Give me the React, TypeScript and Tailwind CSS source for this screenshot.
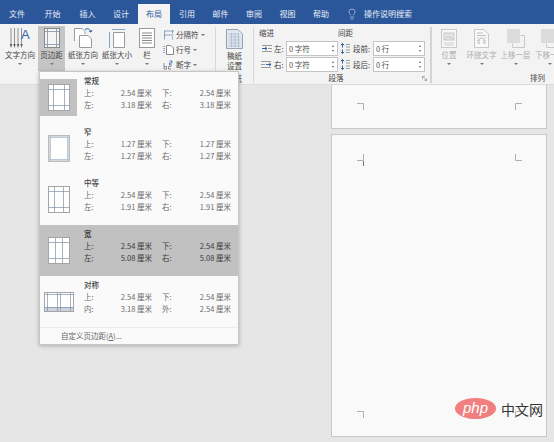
import { Lightbulb } from 'lucide-react'
import type { ReactNode } from 'react'

const font = { fontFamily: '"Noto Sans CJK SC", "Liberation Sans", sans-serif' }

const tabs = [
  { label: '文件', w: 'w-[34px]' },
  { label: '开始', w: 'w-[37px]' },
  { label: '插入', w: 'w-[33px]' },
  { label: '设计', w: 'w-[34px]' },
  { label: '布局', w: 'w-[32px]', active: true },
  { label: '引用', w: 'w-[34px]' },
  { label: '邮件', w: 'w-[33px]' },
  { label: '审阅', w: 'w-[34px]' },
  { label: '视图', w: 'w-[33px]' },
  { label: '帮助', w: 'w-[34px]' },
]

const margins = [
  { name: '常规', v: ['2.54', '2.54', '3.18', '3.18'], l: ['上:', '下:', '左:', '右:'], kind: 'normal', bg: '' },
  { name: '窄', v: ['1.27', '1.27', '1.27', '1.27'], l: ['上:', '下:', '左:', '右:'], kind: 'narrow', bg: '' },
  { name: '中等', v: ['2.54', '2.54', '1.91', '1.91'], l: ['上:', '下:', '左:', '右:'], kind: 'mid', bg: '' },
  { name: '宽', v: ['2.54', '2.54', '5.08', '5.08'], l: ['上:', '下:', '左:', '右:'], kind: 'wide', bg: 'bg-[#c1c1c1]' },
  { name: '对称', v: ['2.54', '2.54', '3.18', '2.54'], l: ['上:', '下:', '内:', '外:'], kind: 'mirror', bg: '' },
]

function Caret() {
  return <div className="w-0 h-0 border-x-[2px] border-x-transparent border-t-[2px] border-t-[#777]" />
}

function PageIcon({ kind }: { kind: string }) {
  if (kind === 'mirror') {
    return (
      <svg width="30" height="20" viewBox="0 0 30 20">
        <rect x="0.5" y="0.5" width="29" height="19" fill="#fff" stroke="#a5a5a5" />
        <rect x="1" y="15" width="28" height="4" fill="#cdd4dd" />
        <path d="M1 2.500H29M1 15.500H29M3.500 1V19M13.500 1V19M16.500 1V19M26.500 1V19" stroke="#7d90a8" strokeWidth="0.7" />
      </svg>
    )
  }
  const x = { normal: [5, 16], narrow: [2, 19], mid: [6, 15], wide: [7, 14] }[kind] ?? [5, 16]
  const y = kind === 'narrow' ? [2, 24] : [5, 21]
  return (
    <svg width="22" height="27" viewBox="0 0 22 27">
      <rect x="0.5" y="0.5" width="21" height="26" fill="#fff" stroke={kind === 'narrow' ? '#bcbcbc' : '#a5a5a5'} />
      {kind === 'narrow' && <path d="M1 1H21V26H1ZM3 3V24H19V3Z" fill="#d5dae1" fillRule="evenodd" />}
      <path
        d={`M1 ${y[0] + 0.5}H21M1 ${y[1] + 0.5}H21M${x[0] + 0.5} 1V26M${x[1] + 0.5} 1V26`}
        stroke={kind === 'narrow' ? '#b5c2d1' : '#7d90a8'}
        strokeWidth="0.7"
      />
    </svg>
  )
}

function MarginRow({ item, selected }: { item: (typeof margins)[number]; selected: boolean }) {
  return (
    <div className={`flex h-[51px] ${item.bg}`}>
      <div className="w-[37px] mr-[7px] flex items-center justify-center shrink-0">
        {selected ? (
          <div className="w-[37px] h-[37px] bg-[#c1c1c1] flex items-center justify-center">
            <PageIcon kind={item.kind} />
          </div>
        ) : (
          <PageIcon kind={item.kind} />
        )}
      </div>
      <div className={`flex-1 pt-[3px] text-[7.5px] leading-[12px] ${item.bg ? 'text-[#3a3a3a]' : 'text-[#6a6a6a]'}`}>
        <div className={`font-medium ${item.bg ? 'text-[#222]' : 'text-[#444]'}`}>{item.name}</div>
        {[0, 2].map((i) => (
          <div key={i} className="flex">
            <span className="w-[30px]">{item.l[i]}</span>
            <span className="w-[38px] text-right whitespace-nowrap">{item.v[i]} 厘米</span>
            <span className="w-[10px]" />
            <span className="w-[30px]">{item.l[i + 1]}</span>
            <span className="w-[39px] text-right whitespace-nowrap">{item.v[i + 1]} 厘米</span>
          </div>
        ))}
      </div>
    </div>
  )
}

function Spin({ text }: { text: string }) {
  return (
    <div className="w-[52px] h-[15px] border border-[#c4c4c4] bg-white flex items-center justify-between pl-[2px] pr-[3px] text-[7.5px] text-[#555]">
      <span>{text}</span>
      <div className="flex flex-col gap-[3px]">
        <div className="w-0 h-0 border-x-[1.5px] border-x-transparent border-b-[2px] border-b-[#666]" />
        <div className="w-0 h-0 border-x-[1.5px] border-x-transparent border-t-[2px] border-t-[#666]" />
      </div>
    </div>
  )
}

function BigBtn({ label, children, w, active }: { label: string; children: ReactNode; w: string; active?: boolean }) {
  return (
    <div className={`${w} h-[45px] shrink-0 flex flex-col items-center ${active ? 'bg-[#c5c5c5]' : ''}`}>
      <div className="h-[24px] flex items-center justify-center">{children}</div>
      <div className="text-[7.5px] leading-[10px] whitespace-nowrap text-[#444]">{label}</div>
      <div className="mt-[3px]"><Caret /></div>
    </div>
  )
}

function GreyBtn({ label, children, w }: { label: string; children: ReactNode; w: string }) {
  return (
    <div className={`${w} shrink-0 flex flex-col items-center`}>
      <div className="h-[19px] flex items-center justify-center">{children}</div>
      <div className="mt-[2px] text-[7.5px] leading-[10px] whitespace-nowrap text-[#adadad]">{label}</div>
      <div className="mt-[3px]"><Caret /></div>
    </div>
  )
}

function Corner({ d }: { d: string }) {
  return (
    <svg width="7" height="7" viewBox="0 0 7 7">
      <path d={d} fill="none" stroke="#b0b0b0" />
    </svg>
  )
}

function IndentIcon({ flip }: { flip?: boolean }) {
  return (
    <svg width="11" height="9" viewBox="0 0 11 9">
      <path d={flip ? 'M0 1.500H10M0 4.500H4M0 7.500H10' : 'M1 1.500H11M7 4.500H11M1 7.500H11'} stroke="#9a9a9a" />
      <path d={flip ? 'M5 4.500H10M8 2.800L10 4.500L8 6.200' : 'M1 4.500H6M4 2.800L6 4.500L4 6.200'} stroke="#2b65ac" fill="none" />
    </svg>
  )
}

function SpacingIcon() {
  return (
    <svg width="10" height="11" viewBox="0 0 10 11">
      <path d="M2.500 0.500V4.500M0.800 2.200L2.500 0.500L4.200 2.200M2.500 6.500V10.500M0.800 8.800L2.500 10.500L4.200 8.800" stroke="#2b65ac" fill="none" />
      <path d="M6 1.500H10M6 4H10M6 7H10M6 9.500H10" stroke="#9a9a9a" />
    </svg>
  )
}

export default function App() {
  return (
    <div style={font} className="relative w-[554px] h-[442px] overflow-hidden bg-[#e6e6e6]">
      {/* Title tabs */}
      <div className="h-[24px] bg-[#2b579a] flex items-end text-[8px] text-[#e8eef7]">
        {tabs.map((t) => (
          <div
            key={t.label}
            className={`${t.w} h-[20px] flex items-center justify-center ${t.active ? 'bg-[#f3f3f3] text-[#2b579a]' : ''}`}
          >
            {t.label}
          </div>
        ))}
        <div className="ml-[8px] h-[20px] flex items-center gap-[6px]">
          <Lightbulb size={12} strokeWidth={1.1} />
          <span>操作说明搜索</span>
        </div>
      </div>

      {/* Ribbon */}
      <div className="h-[61px] bg-[#f3f3f3] border-b border-[#dcdcdc] flex text-[#444]">
        <div className="w-[215px] shrink-0 pl-[3px] pt-[2px] flex">
          <BigBtn label="文字方向" w="w-[34px] mr-[1px]">
            <svg width="22" height="23" viewBox="0 0 22 23">
              <path d="M2 1V19M5.500 1V19M9 1V19M12.500 1V19" stroke="#777" strokeWidth="0.8" />
              <path d="M0.700 17L2 21L3.300 17ZM4.200 17L5.500 21L6.800 17ZM7.700 17L9 21L10.300 17ZM11.200 17L12.500 21L13.800 17Z" fill="#666" />
              <text x="12" y="12" fontSize="13" fontFamily="Liberation Sans" fill="#2b65ac">A</text>
            </svg>
          </BigBtn>
          <BigBtn label="页边距" w="w-[27px]" active>
            <svg width="16" height="20" viewBox="0 0 16 20">
              <rect x="0.5" y="0.5" width="15" height="19" fill="#f5f5f5" stroke="#888" />
              <path d="M1 3.500H15M1 16.500H15M3.500 1V19M12.500 1V19" stroke="#7d90a8" strokeWidth="0.8" />
            </svg>
          </BigBtn>
          <BigBtn label="纸张方向" w="w-[36px]">
            <svg width="24" height="22" viewBox="0 0 24 22">
              <path d="M3.500 14V1.500H11L14 4.500V7" fill="#fff" stroke="#9a9a9a" />
              <path d="M8.500 20.500V8.500H17L20.500 12V20.500Z" fill="#fff" stroke="#9a9a9a" />
              <path d="M14 2.500C17 1 19 2 20 5M20 5L18 4M20 5L21 3" fill="none" stroke="#2b65ac" />
            </svg>
          </BigBtn>
          <BigBtn label="纸张大小" w="w-[32px]">
            <svg width="20" height="22" viewBox="0 0 20 22">
              <path d="M6.500 5.500H17.500V20.500H6.500Z" fill="#fff" stroke="#9a9a9a" />
              <path d="M5 2.500H18M2.500 5V21" stroke="#6d8fb8" strokeWidth="0.8" />
            </svg>
          </BigBtn>
          <BigBtn label="栏" w="w-[28px]">
            <svg width="16" height="20" viewBox="0 0 16 20">
              <rect x="0.500" y="0.500" width="15" height="19" fill="#fff" stroke="#9a9a9a" />
              <path d="M3 5H13M3 7.500H13M3 10H13M3 12.500H13M3 15H13" stroke="#8a8a8a" />
            </svg>
          </BigBtn>
          <div className="pl-[2px] pt-[1px] text-[7.5px] leading-[15px] whitespace-nowrap">
            <div className="flex items-center gap-[2px]">
              <svg width="11" height="10" viewBox="0 0 11 10">
                <path d="M1.500 0.500V9.500M9.500 0.500V3.500M9.500 6.500V9.500M1.500 5H10.500M1.500 1H11" stroke="#6d8fb8" fill="none" strokeWidth="0.8" />
              </svg>
              <span>分隔符</span>
              <Caret />
            </div>
            <div className="flex items-center gap-[2px]">
              <svg width="11" height="10" viewBox="0 0 11 10">
                <path d="M1 1V9" stroke="#2b65ac" strokeDasharray="1 1" />
                <path d="M3.500 0.500H8L10.500 3V9.500H3.500Z" fill="#fff" stroke="#8a8a8a" />
              </svg>
              <span>行号</span>
              <Caret />
            </div>
            <div className="flex items-center gap-[2px]">
              <svg width="11" height="10" viewBox="0 0 11 10">
                <path d="M1 3V9H3.500V6.500H1M5.500 6.500H8M5.500 6.500V9H8" stroke="#777" fill="none" strokeWidth="0.8" />
                <path d="M6.500 1H9V3H6.500V5H9" stroke="#2b65ac" fill="none" strokeWidth="0.8" />
              </svg>
              <span>断字</span>
              <Caret />
            </div>
          </div>
        </div>
        <div className="w-px h-[56px] mt-[3px] bg-[#d8d8d8] shrink-0" />
        <div className="w-[37px] shrink-0 pt-[5px] text-[7.5px] leading-[10px] text-center">
          <svg width="17" height="20" viewBox="0 0 17 20" className="mx-auto">
            <path d="M0.500 0.500H12L16.500 5V19.500H0.500Z" fill="#dfe6f0" stroke="#97a3b3" />
            <path d="M3 5H13M3 8H14M3 11H14M3 14H14M3 17H14M5.500 4V18M9 4V18M12.500 4V18" stroke="#aab5c4" strokeWidth="0.7" />
          </svg>
          <div className="mt-[2px]">稿纸</div>
          <div>设置</div>
          <div className="mt-[3px]">稿纸</div>
        </div>
        <div className="w-px h-[56px] mt-[3px] bg-[#d8d8d8] shrink-0" />
        <div className="w-[176px] shrink-0 relative pl-[5px] pt-[4px] text-[7.5px]">
          <div className="flex">
            <div className="w-[79px]">
              <div className="leading-[10px] mb-[3px]">缩进</div>
              <div className="flex flex-col gap-[1px]">
                {['左:', '右:'].map((t, i) => (
                  <div key={t} className="flex items-center pl-[2px]">
                    <IndentIcon flip={i === 1} />
                    <span className="w-[11px] ml-[2px] mr-[1px] whitespace-nowrap">{t}</span>
                    <Spin text="0 字符" />
                  </div>
                ))}
              </div>
            </div>
            <div>
              <div className="leading-[10px] mb-[3px]">间距</div>
              <div className="flex flex-col gap-[1px]">
                {['段前:', '段后:'].map((t) => (
                  <div key={t} className="flex items-center pl-[2px]">
                    <SpacingIcon />
                    <span className="w-[20px] ml-[3px] whitespace-nowrap">{t}</span>
                    <Spin text="0 行" />
                  </div>
                ))}
              </div>
            </div>
          </div>
          <div className="text-center leading-[10px] mt-[1px] pr-[17px]">段落</div>
          <svg width="5" height="5" viewBox="0 0 5 5" className="absolute left-[168px] top-[52px]">
            <path d="M0.500 3V0.500H3M1.500 1.500L4.500 4.500M4.500 2.500V4.500H2.500" stroke="#888" fill="none" strokeWidth="0.7" />
          </svg>
        </div>
        <div className="w-[2px] h-[56px] mt-[3px] bg-[#d4d4d4] shrink-0" />
        <div className="w-[122px] shrink-0 pt-[5px] text-[7.5px]">
          <div className="flex">
            <GreyBtn label="位置" w="w-[34px]">
              <svg width="16" height="19" viewBox="0 0 16 19">
                <rect x="0.500" y="0.500" width="15" height="18" fill="#f8f8f8" stroke="#c8c8c8" />
                <rect x="3" y="4" width="10" height="7" fill="#e4e4e4" stroke="#c8c8c8" />
                <path d="M4 10L7 7L9 9L10 8L12 10M3 14H13M3 16H13" stroke="#bdbdbd" fill="none" strokeWidth="0.7" />
              </svg>
            </GreyBtn>
            <GreyBtn label="环绕文字" w="w-[31px]">
              <svg width="15" height="19" viewBox="0 0 15 19">
                <path d="M0.500 0.500H10L14.500 5V18.500H0.500Z" fill="#f8f8f8" stroke="#c8c8c8" />
                <path d="M3 4H9M3 6.500H12M3 9H4.500M10.500 9H12M3 11.500H4M11 11.500H12M3 14H4M11 14H12" stroke="#c0c0c0" />
                <path d="M5 15V11C5 8.500 10 8.500 10 11V15" stroke="#b0b0b0" fill="none" />
              </svg>
            </GreyBtn>
            <GreyBtn label="上移一层" w="w-[37px]">
              <svg width="18" height="19" viewBox="0 0 18 19">
                <rect x="0" y="0" width="13" height="14" fill="#dcdcdc" />
                <path d="M13.500 6.500H17.500V18.500H5.500V14.500" fill="none" stroke="#c8c8c8" />
              </svg>
            </GreyBtn>
            <GreyBtn label="下移一层" w="w-[32px]">
              <svg width="18" height="19" viewBox="0 0 18 19">
                <rect x="0" y="0" width="13" height="14" fill="#dcdcdc" />
                <path d="M13.500 6.500H17.500V18.500H5.500V14.500" fill="none" stroke="#c8c8c8" />
              </svg>
            </GreyBtn>
          </div>
          <div className="leading-[10px] mt-[8px] pl-[98px] whitespace-nowrap">排列</div>
        </div>
      </div>

      {/* Document pages */}
      <div className="flex justify-end pr-[7px]">
        <div className="w-[216px]">
          <div className="h-[44px] border border-t-0 border-[#c9c9c9] bg-[#f9f9f9] flex justify-between pl-[25px] pr-[24px] pt-[18px]">
            <Corner d="M0 0.500H6.500V7" />
            <Corner d="M7 0.500H0.500V7" />
          </div>
          <div className="relative mt-[5px] h-[303px] border border-[#c9c9c9] bg-[#f9f9f9] pl-[25px] pr-[24px] pt-[19px] pb-[18px] flex flex-col justify-between">
            <div className="flex justify-between">
              <Corner d="M0 6.500H6.500V0" />
              <Corner d="M0.500 0V6.500H7" />
            </div>
            <div className="absolute left-[31px] top-[26px] w-px h-[5px] bg-[#777]" />
            <div className="flex justify-between">
              <Corner d="M0 0.500H6.500V7" />
              <Corner d="M7 0.500H0.500V7" />
            </div>
          </div>
        </div>
      </div>

      {/* Margins dropdown */}
      <div className="absolute left-[39px] top-[71px] w-[200px] h-[274px] bg-[#fafafa] border border-[#c6c6c6] shadow-[0_1px_4px_rgba(0,0,0,0.25)]">
        {margins.map((m, i) => (
          <MarginRow key={m.name} item={m} selected={i === 0} />
        ))}
        <div className="border-t border-[#ececec] pl-[21px] h-[17px] text-[7.5px] leading-[16px] text-[#666]">
          自定义页边距(<span className="underline">A</span>)...
        </div>
      </div>

      {/* Watermark */}
      <div className="absolute left-[455px] top-[398px] flex items-center gap-[5px]">
        <div className="w-[41px] h-[21px] rounded-[50%] bg-[#f08080] text-white italic text-[15px] leading-[20px] text-center" style={{ fontFamily: '"Liberation Sans", sans-serif' }}>
          php
        </div>
        <span className="text-[14px] leading-[20px] text-[#333]">中文网</span>
      </div>
    </div>
  )
}
